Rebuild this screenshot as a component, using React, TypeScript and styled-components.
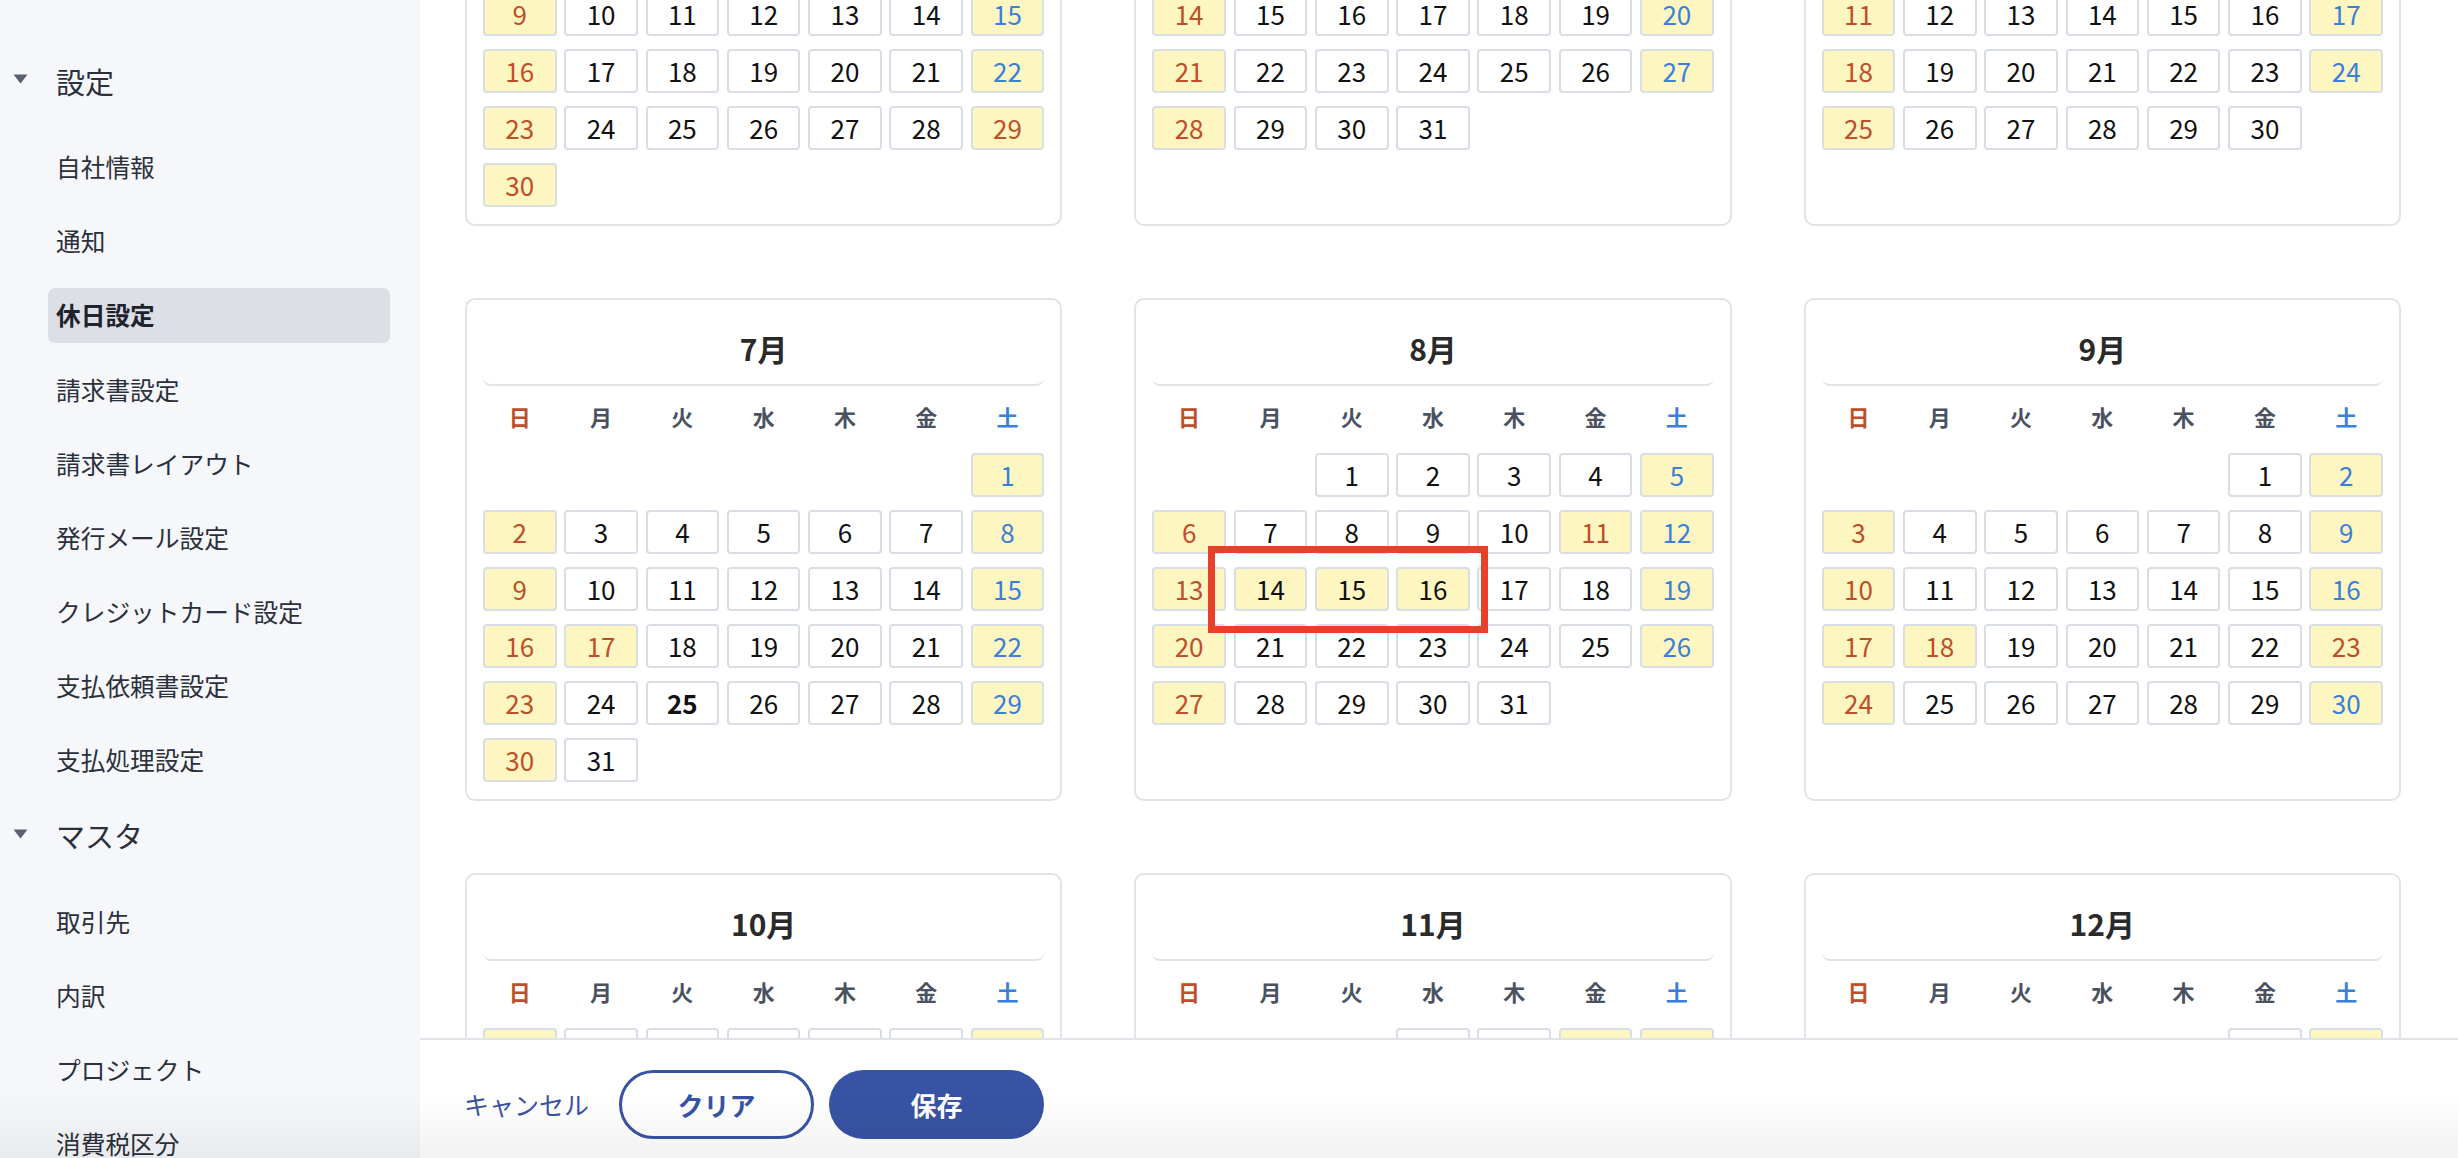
import React, { useLayoutEffect, useRef } from "react";
import styled, { createGlobalStyle } from "styled-components";

const palette = {
    sidebar: "#f5f7fb",
    active: "#dcdfe6",
    text: "#2b303a",
    line: "#e0e3e8",
    cellLine: "#d9dde4",
    yellow: "#fef6c1",
    rust: "#bf4e2a",
    blue: "#3a80d9",
    slate: "#4a5261",
    navy: "#3853a4",
    mark: "#e8412a",
};

const FONT = `"Noto Sans CJK JP", "Noto Sans", sans-serif`;

const YEAR = 2023;
const TODAY = "7-25";
// national holidays of the year
const HOLIDAYS = new Set([
    "1-1", "1-2", "1-9", "2-11", "2-23", "3-21", "4-29", "5-3", "5-4", "5-5",
    "7-17", "8-11", "9-18", "9-23", "10-9", "11-3", "11-23",
]);
// company holidays (obon)
const COMPANY = new Set(["8-14", "8-15", "8-16"]);

const WEEK = ["日", "月", "火", "水", "木", "金", "土"];

const SETTINGS = [
    "自社情報",
    "通知",
    "休日設定",
    "請求書設定",
    "請求書レイアウト",
    "発行メール設定",
    "クレジットカード設定",
    "支払依頼書設定",
    "支払処理設定",
];
const MASTERS = ["取引先", "内訳", "プロジェクト", "消費税区分"];

type Tone = "red" | "blue" | "black";

type Day = {
    day: number;
    weekday: number;
    off: boolean;
    tone: Tone;
    bold: boolean;
};

function buildMonth(month: number): Day[] {
    const last = new Date(YEAR, month, 0).getDate();
    const days: Day[] = [];
    for (let d = 1; d <= last; d++) {
        const key = `${month}-${d}`;
        const weekday = new Date(YEAR, month - 1, d).getDay();
        const holiday = HOLIDAYS.has(key);
        const company = COMPANY.has(key);
        let tone: Tone = "black";
        if (weekday === 0 || holiday) tone = "red";
        else if (weekday === 6) tone = "blue";
        days.push({
            day: d,
            weekday,
            off: weekday === 0 || weekday === 6 || holiday || company,
            tone,
            bold: key === TODAY,
        });
    }
    return days;
}

const GlobalStyle = createGlobalStyle`
    html, body, #root {
        margin: 0;
        padding: 0;
        height: 100%;
        overflow: hidden;
    }
    body {
        font-family: ${FONT};
        color: ${palette.text};
        background: #ffffff;
    }
    * {
        box-sizing: border-box;
    }
`;

function App() {
    const scrollRef = useRef<HTMLDivElement>(null);

    useLayoutEffect(() => {
        if (scrollRef.current) scrollRef.current.scrollTop = 897;
    }, []);

    return (
        <Shell>
            <GlobalStyle />
            <Sidebar>
                <GroupHeader>
                    <Caret />
                    設定
                </GroupHeader>
                <NavList>
                    {SETTINGS.map((label) => (
                        <NavItem key={label}>
                            <NavLabel $active={label === "休日設定"}>{label}</NavLabel>
                        </NavItem>
                    ))}
                </NavList>
                <GroupHeader>
                    <Caret />
                    マスタ
                </GroupHeader>
                <NavList>
                    {MASTERS.map((label) => (
                        <NavItem key={label}>
                            <NavLabel $active={false}>{label}</NavLabel>
                        </NavItem>
                    ))}
                </NavList>
            </Sidebar>
            <Main>
                <ScrollArea ref={scrollRef}>
                    <MonthGrid>
                        {Array.from({ length: 12 }, (_, i) => (
                            <MonthCard key={i} month={i + 1} />
                        ))}
                    </MonthGrid>
                </ScrollArea>
                <Footer>
                    <CancelButton>キャンセル</CancelButton>
                    <OutlineButton>クリア</OutlineButton>
                    <SaveButton>保存</SaveButton>
                </Footer>
            </Main>
            <BottomShade />
        </Shell>
    );
}

function Caret() {
    return (
        <CaretIcon width="15" height="10" viewBox="0 0 15 10">
            <polygon points="0.5,0.5 14.5,0.5 7.5,9.5" fill="#596170" />
        </CaretIcon>
    );
}

function MonthCard({ month }: { month: number }) {
    const days = buildMonth(month);
    return (
        <Card>
            <CardTitle>{month}月</CardTitle>
            <WeekRow>
                {WEEK.map((w, i) => (
                    <WeekLabel key={w} $tone={i === 0 ? "red" : i === 6 ? "blue" : "black"}>
                        {w}
                    </WeekLabel>
                ))}
            </WeekRow>
            <DayGrid>
                {days.map((d) => (
                    <DayCell
                        key={d.day}
                        $off={d.off}
                        $tone={d.tone}
                        $bold={d.bold}
                        $start={d.day === 1 ? d.weekday + 1 : undefined}
                    >
                        {d.day}
                    </DayCell>
                ))}
            </DayGrid>
            {month === 8 && <Highlight />}
        </Card>
    );
}

const Shell = styled.div`
    display: flex;
    height: 100vh;
    width: 100%;
    overflow: hidden;
`;

const Sidebar = styled.nav`
    width: 420px;
    flex-shrink: 0;
    background: ${palette.sidebar};
    padding-top: 44px;
    overflow: hidden;
`;

const GroupHeader = styled.div`
    display: flex;
    align-items: center;
    gap: 28px;
    height: 74px;
    padding-left: 13px;
    font-size: 29px;
    line-height: 1.2;
    color: ${palette.text};
`;

const CaretIcon = styled.svg`
    display: block;
    flex-shrink: 0;
    margin-top: -4px;
`;

const NavList = styled.div`
    margin-top: 12px;
    margin-bottom: 2px;
`;

const NavItem = styled.div`
    display: flex;
    align-items: center;
    height: 74.1px;
`;

const NavLabel = styled.div<{ $active: boolean }>`
    display: flex;
    align-items: center;
    height: 55px;
    width: 342px;
    margin-left: 48px;
    padding-left: 8px;
    border-radius: 7px;
    font-size: 24.7px;
    line-height: 1.2;
    font-weight: ${({ $active }) => ($active ? 700 : 400)};
    color: ${({ $active }) => ($active ? "#1f232b" : palette.text)};
    background: ${({ $active }) => ($active ? palette.active : "transparent")};
`;

const Main = styled.main`
    flex: 1;
    min-width: 0;
    display: flex;
    flex-direction: column;
    background: #ffffff;
`;

const ScrollArea = styled.div`
    flex: 1;
    overflow-y: auto;
    scrollbar-width: none;
    &::-webkit-scrollbar {
        display: none;
    }
`;

const MonthGrid = styled.div`
    display: grid;
    grid-template-columns: repeat(3, 1fr);
    grid-auto-rows: 503px;
    gap: 72px;
    padding: 45px 57px 45px 45px;
`;

const Card = styled.section`
    position: relative;
    height: 503px;
    border: 2px solid ${palette.line};
    border-radius: 10px;
    padding: 0 16px 19px;
    background: #ffffff;
`;

const CardTitle = styled.h2`
    margin: 0;
    padding: 28px 0 16px;
    line-height: 40px;
    text-align: center;
    font-size: 30px;
    font-weight: 700;
    color: #2a2a2a;
    border-bottom: 2px solid ${palette.line};
    border-radius: 0 0 8px 8px;
`;

const toneColor = (tone: Tone) =>
    tone === "red" ? palette.rust : tone === "blue" ? palette.blue : "#111111";

const WeekRow = styled.div`
    display: grid;
    grid-template-columns: repeat(7, 1fr);
    column-gap: 7.7px;
    margin-top: 14px;
    height: 32px;
    align-items: center;
`;

const WeekLabel = styled.div<{ $tone: Tone }>`
    text-align: center;
    font-size: 22px;
    line-height: 1;
    font-weight: 700;
    color: ${({ $tone }) => ($tone === "black" ? palette.slate : toneColor($tone))};
`;

const DayGrid = styled.div`
    display: grid;
    grid-template-columns: repeat(7, 1fr);
    grid-auto-rows: 44px;
    column-gap: 7.7px;
    row-gap: 13px;
    margin-top: 21px;
`;

const DayCell = styled.div<{ $off: boolean; $tone: Tone; $bold: boolean; $start?: number }>`
    display: flex;
    align-items: center;
    justify-content: center;
    grid-column-start: ${({ $start }) => $start ?? "auto"};
    border: 2px solid ${palette.cellLine};
    border-radius: 4px;
    background: ${({ $off }) => ($off ? palette.yellow : "#ffffff")};
    font-size: 26px;
    line-height: 1;
    font-weight: ${({ $bold }) => ($bold ? 700 : 400)};
    color: ${({ $tone }) => toneColor($tone)};
`;

const Highlight = styled.div`
    position: absolute;
    left: 72px;
    top: 246px;
    width: 280px;
    height: 87px;
    border: 7px solid ${palette.mark};
    pointer-events: none;
`;

const Footer = styled.footer`
    display: flex;
    align-items: center;
    flex-shrink: 0;
    height: 120px;
    padding: 10px 0 0 44px;
    border-top: 2px solid ${palette.line};
    background: #ffffff;
`;

const CancelButton = styled.button`
    border: none;
    background: none;
    padding: 0;
    margin-right: 30px;
    font-family: ${FONT};
    font-size: 25px;
    color: ${palette.navy};
    cursor: pointer;
`;

const OutlineButton = styled.button`
    width: 195px;
    height: 69px;
    border: 3px solid ${palette.navy};
    border-radius: 35px;
    background: #ffffff;
    font-family: ${FONT};
    font-size: 26px;
    font-weight: 700;
    color: ${palette.navy};
    cursor: pointer;
`;

const SaveButton = styled.button`
    width: 215px;
    height: 69px;
    margin-left: 15px;
    border: none;
    border-radius: 35px;
    background: ${palette.navy};
    font-family: ${FONT};
    font-size: 26px;
    font-weight: 700;
    color: #ffffff;
    cursor: pointer;
`;

const BottomShade = styled.div`
    position: fixed;
    left: 0;
    right: 0;
    bottom: 0;
    height: 64px;
    background: linear-gradient(to bottom, rgba(0, 0, 0, 0), rgba(0, 0, 0, 0.05));
    pointer-events: none;
`;

export default App;
